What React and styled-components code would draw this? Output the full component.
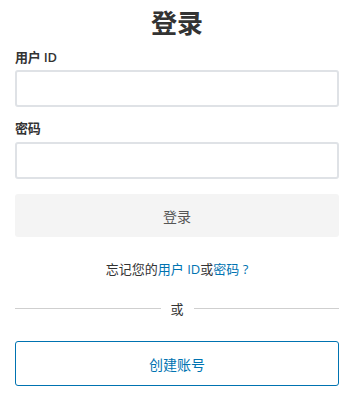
import React from "react";
import styled, { createGlobalStyle } from "styled-components";

const Global = createGlobalStyle`
  html, body { margin: 0; padding: 0; background: #fff; }
  body { font-family: "Open Sans", "Noto Sans CJK SC", sans-serif; color: #333; }
  * { box-sizing: border-box; }
`;

const Page = styled.div`
  display: flex;
  flex-direction: column;
  padding: 8px 8px 0 15px;
`;

const Title = styled.h1`
  margin: 0;
  font-size: 26px;
  line-height: 31px;
  font-weight: 700;
  text-align: center;
  color: #333;
`;

const Field = styled.div`
  display: flex;
  flex-direction: column;
  margin-top: ${(p) => p.$top}px;
`;

const Label = styled.label`
  font-size: 13px;
  line-height: 20px;
  font-weight: 600;
  letter-spacing: -0.2px;
  color: #333;
  margin-bottom: ${(p) => p.$gap}px;
`;

const Input = styled.input`
  height: 37px;
  width: 100%;
  border: 2px solid #dfe2e6;
  border-radius: 3px;
  background: #fff;
  outline: none;
  font: inherit;
  padding: 0 8px;
`;

const PrimaryButton = styled.button`
  margin-top: 15px;
  height: 43px;
  width: 100%;
  border: none;
  border-radius: 3px;
  background: #f4f4f4;
  color: #555;
  font-family: inherit;
  font-size: 14px;
  cursor: pointer;
`;

const Forgot = styled.p`
  margin: 22px 0 0;
  font-size: 13px;
  line-height: 20px;
  text-align: center;
  color: #333;
`;

const Link = styled.a`
  color: #0073b1;
  text-decoration: none;
`;

const Divider = styled.div`
  margin-top: 19px;
  display: flex;
  align-items: center;
  gap: 10px;
  height: 20px;
  font-size: 13px;
  color: #333;
  &::before, &::after {
    content: "";
    flex: 1;
    height: 1px;
    background: #cfcfcf;
  }
`;

const OutlineButton = styled.button`
  margin-top: 23px;
  height: 45px;
  width: 100%;
  border: 1px solid #0073b1;
  border-radius: 3px;
  background: #fff;
  color: #0073b1;
  font-family: inherit;
  font-size: 14px;
  cursor: pointer;
`;

export default function App() {
  return (
    <>
      <Global />
      <Page>
        <Title>登录</Title>
        <Field $top={8}>
          <Label $gap={3}>用户 ID</Label>
          <Input type="text" />
        </Field>
        <Field $top={11}>
          <Label $gap={4}>密码</Label>
          <Input type="password" />
        </Field>
        <PrimaryButton>登录</PrimaryButton>
        <Forgot>
          忘记您的<Link href="#">用户 ID</Link>或<Link href="#">密码</Link>
          <Link href="#"> ?</Link>
        </Forgot>
        <Divider>或</Divider>
        <OutlineButton>创建账号</OutlineButton>
      </Page>
    </>
  );
}
